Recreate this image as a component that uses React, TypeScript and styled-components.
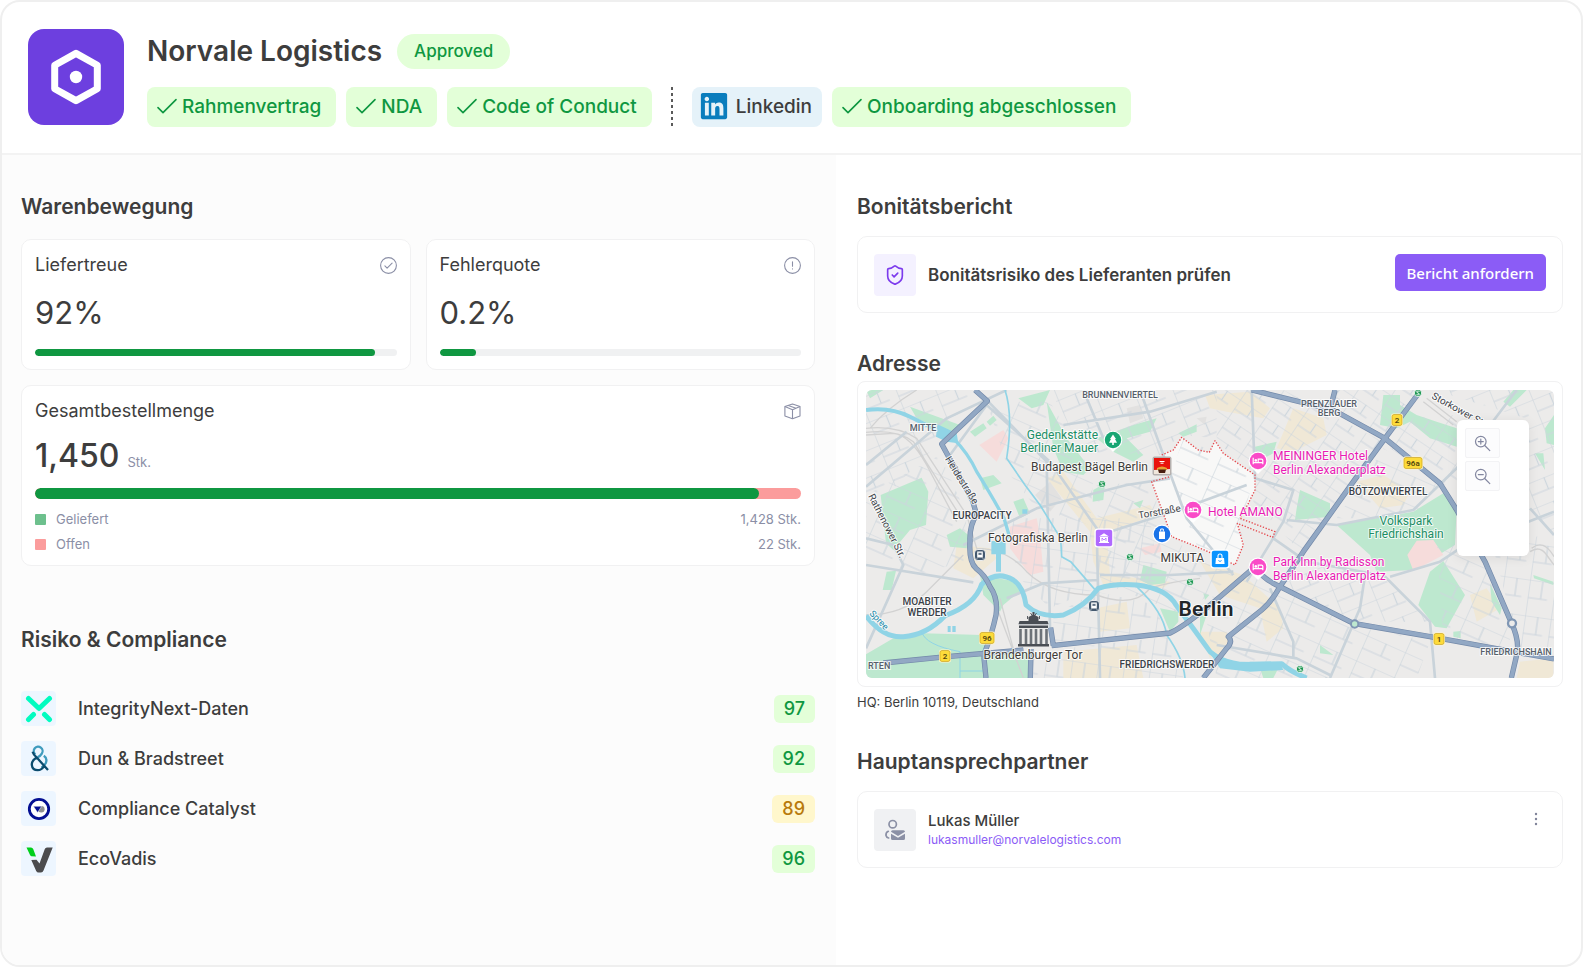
import React from "react";
import styled, { createGlobalStyle } from "styled-components";
import { FaLinkedin } from "react-icons/fa";
import { ShieldCheck } from "lucide-react";

const color = {
  text: "#3d3d3d",
  muted: "#8b8fa6",
  green: "#0f9741",
  greenSoft: "#e3ffd8",
  amber: "#b87a0b",
  amberSoft: "#fff7cc",
  violet: "#8b5cf6",
  line: "#f1f1f2",
};

const GlobalStyle = createGlobalStyle`
  *, *::before, *::after { box-sizing: border-box; }
  body {
    margin: 0;
    background: #fff;
    color: ${color.text};
    font-family: Inter, "Liberation Sans", sans-serif;
  }
  h1, h2, h3, p, ul, dl, dd { margin: 0; padding: 0; font-weight: inherit; }
  svg { display: block; flex: none; }
`;

/* ---------- Page shell ---------- */

const Frame = styled.main`
  display: flex;
  flex-direction: column;
  min-height: 100vh;
  border: 2px solid #efefef;
  border-radius: 20px;
  overflow: hidden;
  background: #fff;
`;

const Header = styled.header`
  display: flex;
  gap: 23px;
  padding: 27px 26px 26px;
  border-bottom: 2px solid #f3f3f3;
`;

const Logo = styled.div`
  display: grid;
  place-items: center;
  flex: none;
  width: 96px;
  height: 96px;
  border-radius: 16px;
  background: #6d3fdf;
`;

const HeaderBody = styled.div`
  display: flex;
  flex-direction: column;
  gap: 18px;
  padding-top: 5px;
`;

const TitleRow = styled.div`
  display: flex;
  align-items: center;
  gap: 15px;
`;

const Title = styled.h1`
  font-size: 28px;
  font-weight: 600;
  line-height: 35px;
`;

const StatusPill = styled.span`
  padding: 0 17px;
  border-radius: 18px;
  background: ${color.greenSoft};
  color: ${color.green};
  font-size: 17px;
  font-weight: 500;
  line-height: 35px;
`;

const TagRow = styled.div`
  display: flex;
  flex-wrap: wrap;
  gap: 10px;
`;

const Tag = styled.span`
  display: flex;
  align-items: center;
  gap: 5px;
  height: 40px;
  padding: 0 15px 2px 10px;
  border-radius: 8px;
  background: ${color.greenSoft};
  color: ${color.green};
  font-size: 19px;
  font-weight: 500;
`;

const LinkTag = styled.a`
  display: flex;
  align-items: center;
  gap: 7px;
  height: 40px;
  padding: 0 10px 2px 7px;
  border-radius: 8px;
  background: #e5f2f9;
  color: ${color.text};
  font-size: 19px;
  font-weight: 500;
  text-decoration: none;
`;

const TagDivider = styled.span`
  width: 2px;
  height: 40px;
  margin: 0 9px;
  background: repeating-linear-gradient(#5a5a5a 0 3px, transparent 3px 6px);
`;

const Columns = styled.div`
  display: grid;
  grid-template-columns: 834fr 745fr;
  flex: 1;
`;

const LeftColumn = styled.div`
  min-width: 0;
  padding: 38px 21px 40px 19px;
  background: #fcfcfc;
`;

const RightColumn = styled.div`
  min-width: 0;
  padding: 38px 18px 40px 21px;
`;

const SectionTitle = styled.h2`
  font-size: 21px;
  font-weight: 600;
  line-height: 28px;
`;

/* ---------- Metrics ---------- */

const MetricGrid = styled.div`
  display: grid;
  grid-template-columns: 1fr 1fr;
  gap: 15px;
  margin: 18px 0 60px;
`;

const MetricCard = styled.article<{ $wide?: boolean }>`
  grid-column: ${(p) => (p.$wide ? "1 / -1" : "auto")};
  padding: 13px;
  border: 1px solid ${color.line};
  border-radius: 10px;
  background: #fff;
`;

const MetricHead = styled.div`
  display: flex;
  align-items: center;
  justify-content: space-between;
`;

const MetricName = styled.h3`
  font-size: 18px;
  line-height: 24px;
`;

const MetricValue = styled.p<{ $compact?: boolean }>`
  margin: ${(p) => (p.$compact ? "13px 0 12px" : "16px 0")};
  font-size: ${(p) => (p.$compact ? 32 : 31)}px;
  font-weight: ${(p) => (p.$compact ? 500 : 400)};
  line-height: 40px;
`;

const Unit = styled.span`
  margin-left: 8px;
  color: ${color.muted};
  font-size: 13px;
  font-weight: 400;
  line-height: 16px;
`;

const Track = styled.div<{ $thick?: boolean }>`
  height: ${(p) => (p.$thick ? 11 : 7)}px;
  border-radius: 6px;
  overflow: hidden;
  background: ${(p) => (p.$thick ? "#fb9c9c" : "#f0f1f2")};
`;

const Fill = styled.div`
  height: 100%;
  border-radius: 6px;
  background: ${color.green};
`;

const Legend = styled.dl`
  display: flex;
  flex-direction: column;
  gap: 9px;
  margin-top: 12px;
  color: ${color.muted};
  font-size: 13px;
  line-height: 16px;
`;

const LegendRow = styled.div`
  display: flex;
  justify-content: space-between;
`;

const LegendTerm = styled.dt<{ $swatch: string }>`
  display: flex;
  align-items: center;
  gap: 10px;
  &::before {
    content: "";
    width: 11px;
    height: 11px;
    border-radius: 1px;
    background: ${(p) => p.$swatch};
  }
`;

/* ---------- Risk list ---------- */

const RiskList = styled.ul`
  display: flex;
  flex-direction: column;
  gap: 15px;
  margin-top: 37px;
  list-style: none;
`;

const RiskRow = styled.li`
  display: flex;
  align-items: center;
  height: 35px;
`;

const RiskIcon = styled.span`
  display: grid;
  place-items: center;
  width: 35px;
  height: 35px;
  margin-right: 22px;
  border-radius: 4px;
  background: #edf6ff;
`;

const RiskName = styled.span`
  flex: 1;
  font-size: 18px;
  font-weight: 500;
`;

const Score = styled.span<{ $warn?: boolean }>`
  padding: 0 10px;
  border-radius: 6px;
  background: ${(p) => (p.$warn ? color.amberSoft : color.greenSoft)};
  color: ${(p) => (p.$warn ? color.amber : color.green)};
  font-size: 18px;
  font-weight: 500;
  line-height: 28px;
`;

/* ---------- Right column ---------- */

const InfoCard = styled.div`
  display: flex;
  align-items: center;
  gap: 12px;
  margin: 15px 0 37px;
  padding: 17px 16px 16px;
  border: 1px solid ${color.line};
  border-radius: 10px;
  background: #fff;
`;

const IconTile = styled.span<{ $tone: string }>`
  display: grid;
  place-items: center;
  width: 42px;
  height: 42px;
  border-radius: 4px;
  background: ${(p) => p.$tone};
`;

const InfoText = styled.p`
  flex: 1;
  font-size: 17px;
  font-weight: 600;
`;

const PrimaryButton = styled.button`
  align-self: flex-start;
  height: 37px;
  padding: 0 12px;
  border: 0;
  border-radius: 5px;
  background: ${color.violet};
  color: #fff;
  font-family: "Noto Sans", sans-serif;
  font-size: 15px;
  font-weight: 500;
`;

const MapCard = styled.div`
  margin-top: 3px;
  padding: 8px;
  border: 1px solid ${color.line};
  border-radius: 8px;
`;

const MapView = styled.div`
  position: relative;
  border-radius: 6px;
  overflow: hidden;
`;

const MapPanel = styled.div`
  position: absolute;
  top: 30px;
  right: 25px;
  display: flex;
  flex-direction: column;
  gap: 3px;
  width: 72px;
  height: 136px;
  padding: 8px;
  border-radius: 6px;
  background: #fff;
  box-shadow: 0 2px 12px rgba(0, 0, 0, 0.08);
`;

const ZoomButton = styled.button`
  display: grid;
  place-items: center;
  width: 35px;
  height: 30px;
  padding: 0;
  border: 1px solid #f3f3f5;
  border-radius: 2px;
  background: #fcfcfd;
`;

const AddressLine = styled.p`
  margin: 5px 0 36px;
  font-size: 13px;
  line-height: 20px;
`;

const ContactBody = styled.div`
  flex: 1;
  line-height: 19px;
`;

const ContactName = styled.p`
  font-size: 15px;
  font-weight: 500;
`;

const MailLink = styled.a`
  display: block;
  color: ${color.violet};
  font-size: 12px;
  text-decoration: none;
`;

const MenuButton = styled.button`
  display: grid;
  place-items: center;
  align-self: flex-start;
  width: 20px;
  height: 20px;
  padding: 0;
  border: 0;
  background: none;
`;

/* ---------- Icons ---------- */

const Tick = () => (
  <svg width="20" height="16" viewBox="0 0 20 16" fill="none" stroke={color.green} strokeWidth="1.6" strokeLinecap="round" strokeLinejoin="round">
    <path d="M1 9.6 6 14.6 19 1.6" />
  </svg>
);

const HexLogo = () => (
  <svg width="52" height="56" viewBox="0 0 52 56">
    <path d="M26 4.400 47.300 16.200V39.800L26 51.600 4.700 39.800V16.200Z" fill="none" stroke="#fff" strokeWidth="7" strokeLinejoin="round" />
    <circle cx="26" cy="28" r="6.200" fill="#fff" />
  </svg>
);

const CheckCircle = () => (
  <svg width="17" height="17" viewBox="0 0 17 17" fill="none" stroke={color.muted} strokeWidth="1.1" strokeLinecap="round" strokeLinejoin="round">
    <circle cx="8.500" cy="8.500" r="7.900" />
    <path d="m4.900 8.900 2.200 2.200 5-4.900" />
  </svg>
);

const AlertCircle = () => (
  <svg width="17" height="17" viewBox="0 0 17 17" fill="none" stroke={color.muted} strokeWidth="1.100" strokeLinecap="round">
    <circle cx="8.500" cy="8.500" r="7.900" />
    <path d="M8.500 4.900v4.400M8.500 11.800v.1" />
  </svg>
);

const BoxIcon = () => (
  <svg width="17" height="17" viewBox="0 0 17 17" fill="none" stroke={color.muted} strokeWidth="1.100" strokeLinejoin="round">
    <path d="M8.500 1.100 16 3.600V13L8.500 15.800.900 13V3.600Z" />
    <path d="M.9 3.600 8.500 6.700 16 3.600M8.500 6.700v9.100M4.300 2.500 12 5.200" />
  </svg>
);

const IntegrityLogo = () => (
  <svg width="28" height="28" viewBox="0 0 28 28" fill="none" stroke="#00fcc0" strokeWidth="5" strokeLinecap="round" strokeLinejoin="round">
    <path d="M3.500 3.500 14 13.500 24.500 3.500" />
    <path d="M3.500 24.500 8.500 19.500M24.500 24.500l-5-5" />
  </svg>
);

const DnbLogo = () => (
  <svg width="24" height="28" viewBox="0 0 24 28" fill="none" strokeWidth="2.300" strokeLinecap="butt">
    <path d="M8.300 9.400A4.400 4.400 0 1 1 14.800 8.600Q13.600 10.800 10.600 12.300" stroke="#3f9bbd" />
    <path d="M16.800 10.800Q20.800 13.400 18.700 18.200 17.400 20.600 14.500 22.400" stroke="#3f9bbd" />
    <path d="M5.600 6.800Q6.500 10 9.800 12.600L21 25M10.400 12.300Q4.800 15 4.800 19.800 5.400 25.200 10.800 25.200 14.600 25.200 17.200 21" stroke="#0b4c6e" />
  </svg>
);

const CatalystLogo = () => (
  <svg width="24" height="24" viewBox="0 0 24 24">
    <circle cx="12" cy="12" r="9.700" fill="#fff" stroke="#040f92" strokeWidth="2.800" />
    <circle cx="14.300" cy="12.200" r="3.300" fill="#8f8f92" />
    <path d="M6.400 9.300h8.200L10.600 15.600Z" fill="#040f92" stroke="#fff" strokeWidth=".5" />
  </svg>
);

const EcoVadisLogo = () => (
  <svg width="28" height="28" viewBox="0 0 28 28">
    <path d="M1.500 2.500H6Q7.500 2.500 8.200 4L11 11.500 6.300 11.200Q5.500 11 5 10Z" fill="#00cf1c" />
    <path d="M6.300 15 11.500 14.800 14.500 18.500 19.800 4Q20.300 2.500 22 2.500H27.700L18.500 25.500Q17.800 27.500 16 27.500H13.500Q12 27.500 11.200 26Z" fill="#4c4c4e" />
  </svg>
);

const ContactIcon = () => (
  <svg width="22" height="22" viewBox="0 0 22 22" fill="none" stroke="#8b90a5" strokeWidth="1.700" strokeLinecap="round">
    <circle cx="8.700" cy="5.200" r="3.700" />
    <path d="M4.300 12.300Q1.600 13.500 2 16.500 2.500 18.500 4.600 19" />
    <path d="M8.600 11.200h10.800q1.600 0 1.600 1.600l-7 4.300-7-4.300q0-1.600 1.600-1.600ZM7 14.700l7 4 7-4v4.800q0 1.600-1.600 1.600H8.600Q7 21.100 7 19.500Z" fill="#8b90a5" stroke="none" />
  </svg>
);

const Magnifier = ({ plus }: { plus?: boolean }) => (
  <svg width="17" height="17" viewBox="0 0 17 17" fill="none" stroke="#8387a0" strokeWidth="1.200" strokeLinecap="round">
    <circle cx="6.800" cy="6.600" r="5.300" />
    <path d="M10.700 10.500 15.800 15.600M4.300 6.600h5" />
    {plus && <path d="M6.800 4.100v5" />}
  </svg>
);

const Dots = () => (
  <svg width="4" height="14" viewBox="0 0 4 14" fill="#7f8499">
    <circle cx="2" cy="2" r="1.200" />
    <circle cx="2" cy="7" r="1.200" />
    <circle cx="2" cy="12" r="1.200" />
  </svg>
);

/* ---------- Map ---------- */

const MapSvg = styled.svg`
  width: 100%;
  height: auto;
  background: #ecebea;
  font-family: Roboto, sans-serif;
`;

type LabelKind = "area" | "district" | "place" | "park" | "hotel" | "street" | "water" | "city";

const labelStyle: Record<LabelKind, { size: number; weight: number; fill: string }> = {
  area: { size: 9, weight: 500, fill: "#56606a" },
  district: { size: 10, weight: 500, fill: "#3a4148" },
  place: { size: 12, weight: 400, fill: "#3f3c38" },
  park: { size: 12, weight: 400, fill: "#1d8e65" },
  hotel: { size: 12, weight: 400, fill: "#e91bb4" },
  street: { size: 10, weight: 400, fill: "#3f454b" },
  water: { size: 9, weight: 400, fill: "#1687a8" },
  city: { size: 21, weight: 600, fill: "#22262a" },
};

const MapText = styled.text<{ $kind: LabelKind }>`
  font-size: ${(p) => labelStyle[p.$kind].size}px;
  font-weight: ${(p) => labelStyle[p.$kind].weight};
  fill: ${(p) => labelStyle[p.$kind].fill};
  stroke: rgba(255, 255, 255, 0.8);
  stroke-width: 2px;
  stroke-linejoin: round;
  paint-order: stroke;
`;

type MapLabel = {
  kind: LabelKind;
  x: number;
  y: number;
  text: string;
  anchor?: "start" | "middle" | "end";
  angle?: number;
};

const labels: MapLabel[] = [
  { kind: "area", x: 254, y: 8, text: "BRUNNENVIERTEL", anchor: "middle" },
  { kind: "area", x: 57, y: 41, text: "MITTE", anchor: "middle" },
  { kind: "area", x: 463, y: 17, text: "PRENZLAUER", anchor: "middle" },
  { kind: "area", x: 463, y: 26, text: "BERG", anchor: "middle" },
  { kind: "area", x: 650, y: 265, text: "FRIEDRICHSHAIN", anchor: "middle" },
  { kind: "area", x: 2, y: 279, text: "RTEN" },
  { kind: "district", x: 116, y: 129, text: "EUROPACITY", anchor: "middle" },
  { kind: "district", x: 522, y: 105, text: "BÖTZOWVIERTEL", anchor: "middle" },
  { kind: "district", x: 61, y: 215, text: "MOABITER", anchor: "middle" },
  { kind: "district", x: 61, y: 226, text: "WERDER", anchor: "middle" },
  { kind: "district", x: 301, y: 278, text: "FRIEDRICHSWERDER", anchor: "middle" },
  { kind: "park", x: 232, y: 49, text: "Gedenkstätte", anchor: "end" },
  { kind: "park", x: 232, y: 62, text: "Berliner Mauer", anchor: "end" },
  { kind: "park", x: 540, y: 135, text: "Volkspark", anchor: "middle" },
  { kind: "park", x: 540, y: 148, text: "Friedrichshain", anchor: "middle" },
  { kind: "place", x: 282, y: 81, text: "Budapest Bägel Berlin", anchor: "end" },
  { kind: "place", x: 222, y: 152, text: "Fotografiska Berlin", anchor: "end" },
  { kind: "place", x: 338, y: 172, text: "MIKUTA", anchor: "end" },
  { kind: "place", x: 167, y: 269, text: "Brandenburger Tor", anchor: "middle" },
  { kind: "hotel", x: 342, y: 126, text: "Hotel AMANO" },
  { kind: "hotel", x: 407, y: 70, text: "MEININGER Hotel" },
  { kind: "hotel", x: 407, y: 84, text: "Berlin Alexanderplatz" },
  { kind: "hotel", x: 407, y: 176, text: "Park Inn by Radisson" },
  { kind: "hotel", x: 407, y: 190, text: "Berlin Alexanderplatz" },
  { kind: "street", x: 294, y: 125, text: "Torstraße", anchor: "middle", angle: -10 },
  { kind: "street", x: 93, y: 92, text: "Heidestraße", anchor: "middle", angle: 58 },
  { kind: "street", x: 2, y: 106, text: "Rathenower Str.", angle: 63 },
  { kind: "street", x: 565, y: 8, text: "Storkower Str.", angle: 29 },
  { kind: "water", x: 3, y: 224, text: "Spree", angle: 46 },
  { kind: "city", x: 340, y: 226, text: "Berlin", anchor: "middle" },
];

const grids: { id: string; w: number; h: number; angle: number }[] = [
  { id: "a", w: 124, h: 82, angle: 24 },
  { id: "b", w: 110, h: 76, angle: -22 },
  { id: "c", w: 78, h: 108, angle: 8 },
  { id: "d", w: 92, h: 66, angle: 34 },
];

/* Street blocks: each area is filled with one of the grids above. */
const blocks: [string, string][] = [
  ["b", "M48 45H370L270 200 130 340 48 360Z"],
  ["a", "M48 360 270 240 350 420 340 560 200 600 48 560Z"],
  ["a", "M410 80H600L730 300 720 450 560 400 480 300Z"],
  ["b", "M600 45H1100V190L990 180 930 240 700 230Z"],
  ["c", "M480 430H900L930 640 740 640 600 700 500 600Z"],
  ["a", "M740 330 900 320 960 500 1090 540 1150 600 1000 720 750 620Z"],
  ["c", "M610 720 740 650 920 690 940 770 610 800Z"],
  ["c", "M550 830 960 785 1000 909H550Z"],
  ["a", "M960 310 1000 190 1090 230 1210 310 1180 430 1170 560 1040 510Z"],
  ["d", "M1100 45H1300L1600 200 1360 540 1210 380 1220 300 1100 200Z"],
  ["d", "M1450 45H1700L1610 190 1440 100Z"],
  ["d", "M1650 130 1820 120V330L1770 330 1620 220Z"],
  ["a", "M1600 220 1760 330 1690 430 1460 430Z"],
  ["a", "M1060 680 1200 600 1290 640 1490 740 1740 800 1700 909H1100Z"],
  ["b", "M1310 560 1590 600 1740 740 1510 740 1310 640Z"],
  ["a", "M1760 500 1890 520 1980 750 1980 820 1780 790Z"],
  ["c", "M1930 520 2112 470V860L2010 830Z"],
  ["b", "M1750 45H2112V480L2040 400 2030 130Z"],
];

const parks = [
  "M92 360 215 308 235 350 228 450 180 465 130 525 108 505Z",
  "M48 838 130 790 220 775 395 780 410 825 540 830V909H48Z",
  "M48 45 100 45 60 70ZM180 95 330 150 300 175 200 130Z",
  "M505 70 600 45 580 90 545 100ZM590 80 650 190 720 280 700 300 640 290 610 220Z",
  "M740 190 850 150 920 130 900 170 830 190 880 240 850 260 790 230Z",
  "M985 175 1040 148 1040 170 1000 185ZM980 300 1050 260 1040 320 1010 340 960 320Z",
  "M110 590 138 587 125 645 98 645ZM360 170 400 145 410 160 375 185ZM410 140 430 122 440 135 420 152Z",
  "M390 600 500 620 520 640 460 690 450 710 400 660Z",
  "M390 310 430 300 455 325 400 345ZM490 380 520 370 540 415 510 430ZM290 480 330 460 355 480 350 520 300 515Z",
  "M880 570 950 590 945 625 900 630 870 615ZM930 700 985 710 985 740 960 770ZM1050 700 1070 720 1050 780Z",
  "M730 345 765 325 760 375 728 380ZM850 385 880 375 870 400Z",
  "M1460 450 1690 410 1780 355 1820 400 1815 510 1690 585 1580 590 1560 540Z",
  "M1740 590 1780 558 1845 660 1790 760 1755 755 1705 690Z",
  "M1350 345 1440 385 1440 425 1335 435 1340 400Z",
  "M1600 60 1650 60 1650 90 1700 120 1760 140 1820 160V215L1740 190 1680 140 1640 160 1590 150Z",
  "M1215 215 1280 200 1270 235 1220 260ZM1135 310 1165 315 1150 345 1125 330Z",
  "M1960 80 1990 45H2030L1980 95ZM2085 160 2112 120V210L2090 205ZM2055 235 2080 235 2085 285Z",
  "M1410 810 1450 840 1410 835ZM1810 770 1832 768 1832 790 1810 785ZM1060 655 1078 660 1065 675Z",
  "M1920 625 1955 700 1950 720 1925 680ZM2050 600 2110 620V630L2052 610Z",
  "M1230 880 1290 870 1270 909H1240Z",
];

const centres = [
  "M590 310 640 290 740 430 900 390 920 420 770 470 780 600 960 620 940 640 760 630 730 560 720 470Z",
  "M1065 60 1200 50 1260 100 1240 130 1130 110 1080 100Z",
  "M1330 100 1420 130 1430 180 1330 230 1280 220Z",
  "M1520 320 1600 300 1680 350 1660 390 1590 400Z",
  "M320 510 420 520 440 550 370 610 310 580Z",
  "M640 830 860 810 880 909H640ZM740 700 830 680 840 760 750 770Z",
  "M1050 560 1180 600 1290 700 1300 760 1250 800 1230 700 1110 660Z",
  "M1860 660 1910 640 1950 700 1880 740ZM2010 860 2110 850V909H2000Z",
  "M1050 770 1130 770 1140 820 1080 850Z",
];

const mainRoads = [
  "M375 45 412 78 275 207 368 378 380 420Q358 450 360 500 356 560 378 580 405 600 420 635 445 670 438 720 425 780 405 830L402 850 408 909",
  "M100 864 290 845 520 825M605 812 960 774Q1010 750 1110 665L1215 575",
  "M602 758 610 812M543 822 541 909",
  "M1215 575Q1235 610 1290 635L1510 745 1770 790 2112 852",
  "M1060 909 1130 820Q1150 800 1135 785L1235 705Q1265 680 1290 635L1360 530 1510 320 1605 190 1702 60",
  "M1205 45 1450 105 1605 190 1770 325 1820 405 1905 560 1985 745Q2010 800 2000 840L1984 909",
  "M1455 45 1440 105",
];

const streets = [
  "M48 335 290 130 470 45M300 240 410 90 600 260 740 460 750 909M48 270 170 170",
  "M340 510 560 400 830 330 960 310M415 80 590 260 600 760",
  "M48 490 130 510 160 570 48 820M48 570 370 622M470 670 580 625 740 615",
  "M640 150 900 110 1100 50M870 45 940 240 1010 430 1150 600M700 45 760 190",
  "M780 470 1000 400 1190 330M750 600 960 600 1150 590",
  "M1205 45 1215 310 1330 345 1300 440 1190 620",
  "M1310 435 1460 450 1690 405 1830 270 2000 45",
  "M1600 600 1740 740 1755 909M1620 605 1770 560 1830 520M1545 600 1530 700 1440 909",
  "M2035 440 2112 410M2040 400 2112 480M1270 490 1370 560 1590 600",
  "M1100 810 1340 850 1440 900M1260 640 1330 800 1330 850",
];

const Bed = ({ x, y }: { x: number; y: number }) => (
  <g transform={`translate(${x} ${y})`}>
    <path d="M0 13 5 8H-5Z" fill="#fff" />
    <circle r="9.500" fill="#fff" />
    <circle r="8.300" fill="#fa4bc8" />
    <path d="M-4.800-3.200V3.200M-4.800 1.600H4.800V3.200M4.800 1.600V-.8Q4.800-1.800 3.600-1.800H.2V1.600" fill="none" stroke="#fff" strokeWidth="1.200" />
    <circle cx="-2.200" cy="-.6" r="1.300" fill="#fff" />
  </g>
);

const RouteSign = ({ x, y, label }: { x: number; y: number; label: string }) => {
  const w = 6 + label.length * 4;
  return (
    <g transform={`translate(${x} ${y})`}>
      <rect x={-w / 2 - 1} y="-6.500" width={w + 2} height="13" rx="2.500" fill="#fff6c9" />
      <rect x={-w / 2} y="-5.500" width={w} height="11" rx="2" fill="#fddb3a" stroke="#c9a227" strokeWidth=".7" />
      <text y="3" textAnchor="middle" fontSize="8" fontWeight="600" fill="#54450c">{label}</text>
    </g>
  );
};

const SBahn = ({ x, y }: { x: number; y: number }) => (
  <g transform={`translate(${x} ${y})`}>
    <circle r="3.600" fill="#15934c" stroke="#fff" strokeWidth=".8" />
    <path d="M1.500-1.500Q0-2.600-1.300-1.500-1.500-.3 0 0 1.600.4 1.300 1.500 0 2.500-1.500 1.400" fill="none" stroke="#fff" strokeWidth=".9" />
  </g>
);

const Station = ({ x, y }: { x: number; y: number }) => (
  <g transform={`translate(${x} ${y})`}>
    <rect x="-5.500" y="-5.500" width="11" height="11" rx="3.500" fill="#44596f" stroke="#fff" strokeWidth=".8" />
    <path d="M-2.800-3.500H2.800V2.500H-2.800Z" fill="#fff" />
    <path d="M-1.800-2.200H1.800V0H-1.800ZM-2.500 2.700-3.300 4M2.500 2.700 3.300 4" fill="#44596f" stroke="#fff" strokeWidth=".5" />
  </g>
);

const Gate = () => (
  <g transform="translate(167.500 241)" fill="#4a4e54">
    <path d="M-1-19H1V-16L5-14H-5L-1-16ZM-4-18V-14.500M-5-14H5V-10H-5Z" />
    <path d="M-6-15v3M6-15v3M-3-18l2 3M3-18l-2 3" stroke="#4a4e54" strokeWidth=".9" />
    <path d="M-14-10H14L15-7H-15ZM-14.500-5.500H14.500V-3H-14.500ZM-15.500 13H15.500V15.500H-15.500Z" />
    <path d="M-13-2V13M-7.500-2V13M-2.500-2V13M2.500-2V13M7.500-2V13M13-2V13" stroke="#6d7278" strokeWidth="2.600" />
    <path d="M-15-6.500H15" stroke="#b9bdc2" strokeWidth=".8" />
  </g>
);

const BerlinMap = () => (
  <MapSvg viewBox="0 0 688 288" role="img" aria-label="Karte von Berlin">
    <defs>
      {grids.map((g) => (
        <pattern key={g.id} id={`grid-${g.id}`} width={g.w} height={g.h} patternUnits="userSpaceOnUse" patternTransform={`rotate(${g.angle})`}>
          <path d={`M0 0H${g.w}M0 0V${g.h}M${g.w / 2} 0V${g.h / 2}M0 ${g.h / 2}H${g.w * 0.75}`} fill="none" stroke="#cdd6dd" strokeWidth="3.600" />
        </pattern>
      ))}
    </defs>
    <g transform="scale(.333333) translate(-48 -45)" fill="none" strokeLinejoin="round">
      <path d={centres.join("")} fill="#f0e8d6" />
      <path d={parks.join("")} fill="#bde8cf" />
      <path d="M388 210 460 165 475 190 440 260ZM480 455 560 430 570 480 580 590 540 600 480 520ZM870 520 930 505 935 530 885 540ZM1700 497 1750 495 1780 540 1690 587 1672 540Z" fill="#f6dcdb" />
      <path d="M555 360 600 320 635 370 600 410ZM830 100 870 90 880 130 840 145ZM950 250 980 245 975 280ZM1040 130 1070 125 1065 150Z" fill="#e2e1e0" />
      <path d="M935 240 970 225 995 187 1045 225 1078 232 1095 197 1120 235 1215 300 1215 345 1190 395 1165 445 1180 510 1155 570 1085 535 965 485 945 430 905 320 960 305Z" fill="#f8f8f7" />
      {blocks.map(([id, d]) => (
        <path key={d} d={d} fill={`url(#grid-${id})`} />
      ))}
      <g stroke="#d2d2d2" strokeWidth="4">
        <path d="M48 160Q140 150 200 190L350 420 380 520Q470 520 530 590 600 660 740 660 850 700 900 640 960 620 1050 610M48 172Q140 162 190 200L335 430M48 180 130 175Q180 180 230 270L320 440M48 720Q160 720 230 650L340 540M60 160Q110 100 200 45M430 670 520 909M450 670 500 860M1720 80 1810 150M1730 70 1820 140" />
        <path d="M2040 530Q2070 510 2090 540L2112 570M2045 520Q2080 490 2112 545" />
      </g>
      <path d={streets.join("")} stroke="#c9d3da" strokeWidth="8" />
      <g stroke="#90d4e6">
        <path d="M48 105Q120 95 180 125L260 165" strokeWidth="12" />
        <path d="M262 148 320 175 325 205 290 200 258 185Z" fill="#90d4e6" stroke="none" />
        <path d="M310 190Q355 235 380 290 430 370 462 430L480 490" strokeWidth="10" />
        <path d="M424 498H467V538H453V590H438V538H424ZM517 403H532V416H517ZM293 753H302V771H293ZM307 753H317V771H307Z" fill="#90d4e6" stroke="none" />
        <path d="M48 722Q100 790 160 785 230 780 285 722 375 690 395 628 440 585 490 615 520 635 528 690 570 730 640 720 705 695 745 640 790 625 860 630 950 640 978 690 1030 760 1080 830L1120 860Q1170 880 1200 868L1295 866Q1320 890 1370 909" strokeWidth="15" />
        <path d="M1050 790Q1090 850 1170 860L1290 862 1300 885 1200 890 1110 880Z" fill="#90d4e6" stroke="none" />
        <path d="M465 45Q490 120 470 250L525 330 570 390 632 490 635 545 662 560 740 650M860 635Q940 710 950 780 1000 850 1005 909" strokeWidth="5" />
        <path d="M215 770Q225 810 330 830V909M330 888H400" strokeWidth="3" />
      </g>
      <g strokeLinecap="butt">
        <path d={mainRoads.join("")} stroke="#7389a9" strokeWidth="16" />
        <path d={mainRoads.join("")} stroke="#92a8c4" strokeWidth="12" />
        <circle cx="1514" cy="747" r="11" fill="#bde8cf" stroke="#7f96b4" strokeWidth="6" />
        <circle cx="1986" cy="745" r="12" fill="#ecebea" stroke="#7f96b4" strokeWidth="7" />
      </g>
      <path d="M935 240 970 225 995 187 1045 225 1078 232 1095 197 1120 235 1215 300 1215 345 1190 395 1170 430 1275 470 1268 487 1162 445 1180 510 1155 570 1085 535 1040 515 965 485 945 430 905 320 960 305" stroke="#e5484d" strokeWidth="4" strokeDasharray="4 5" />
    </g>

    <SBahn x={236} y={94} />
    <SBahn x={264} y={167} />
    <SBahn x={324} y={192} />
    <SBahn x={552} y={3} />
    <SBahn x={434} y={279} />
    <Station x={114} y={165} />
    <Station x={228} y={216} />
    <RouteSign x={121} y={248} label="96" />
    <RouteSign x={79} y={266} label="2" />
    <RouteSign x={531} y={30} label="2" />
    <RouteSign x={547} y={73} label="96a" />
    <RouteSign x={573} y={249} label="1" />
    <Gate />

    {labels.map((l, i) => (
      <MapText
        key={i}
        $kind={l.kind}
        textAnchor={l.anchor ?? "start"}
        transform={`translate(${l.x} ${l.y})${l.angle ? ` rotate(${l.angle})` : ""}`}
      >
        {l.text}
      </MapText>
    ))}

    <g transform="translate(247 50)">
      <path d="M0 12 5 7H-5Z" fill="#fff" />
      <circle r="9.300" fill="#fff" />
      <circle r="8.200" fill="#17a673" />
      <path d="M0-5.500 3-1H2L4 2.800H.8V5H-.8V2.800H-4L-2-1H-3Z" fill="#fff" />
    </g>
    <Bed x={327} y={120} />
    <Bed x={392} y={71} />
    <Bed x={392} y={177} />
    <g transform="translate(296 144)">
      <circle r="9.500" fill="#fff" />
      <circle r="8.300" fill="#1a73e8" />
      <path d="M-3-2.500H3V5H-3Z" fill="#fff" />
      <path d="M-1.300-2.500V-5H1.300V-2.500" fill="none" stroke="#fff" />
    </g>
    <g transform="translate(238 148)">
      <rect x="-9.500" y="-9.500" width="19" height="19" rx="3" fill="#fff" />
      <rect x="-8.200" y="-8.200" width="16.400" height="16.400" rx="2" fill="#b069ff" />
      <path d="M-5-1.500 0-4.800 5-1.500ZM-5 4H5V5H-5ZM-4-1H4V4H-4Z" fill="#fff" />
      <path d="M-2 3V0L0 2 2 0V3" fill="none" stroke="#b069ff" strokeWidth=".8" />
    </g>
    <g transform="translate(354 169)">
      <rect x="-9.500" y="-9.500" width="19" height="19" rx="3" fill="#fff" />
      <rect x="-8.200" y="-8.200" width="16.400" height="16.400" rx="2" fill="#0a94ff" />
      <path d="M-4-1H4L4.600 5H-4.600Z" fill="#fff" />
      <path d="M-2-1V-3Q-2-5 0-5 2-5 2-3V-1" fill="none" stroke="#fff" strokeWidth="1.100" />
      <path d="M-1.600 1.500Q0 3.500 1.600 1.500" fill="none" stroke="#0a94ff" strokeWidth=".9" />
    </g>
    <g transform="translate(296 76)">
      <rect x="-9.500" y="-9.500" width="19" height="19" rx="2" fill="#b5b0ae" />
      <rect x="-8" y="-8" width="16" height="16" fill="#e9120c" />
      <path d="M-8 4 8 3V8H-8Z" fill="#f1e7dc" />
      <path d="M-5 2Q0-1 5 2V4H-5Z" fill="#e8a032" />
      <path d="M-4 3.500H4L3 7H-3Z" fill="#4a1f10" />
      <path d="M-2.500-4.500H2.500M-1.500-2.800H1.500" stroke="#fff" strokeWidth="1" />
    </g>
  </MapSvg>
);

/* ---------- Page ---------- */

const risks = [
  { name: "IntegrityNext-Daten", score: 97, icon: <IntegrityLogo /> },
  { name: "Dun & Bradstreet", score: 92, icon: <DnbLogo /> },
  { name: "Compliance Catalyst", score: 89, warn: true, icon: <CatalystLogo /> },
  { name: "EcoVadis", score: 96, icon: <EcoVadisLogo /> },
];

const rates = [
  { name: "Liefertreue", value: "92%", fill: 94, icon: <CheckCircle /> },
  { name: "Fehlerquote", value: "0.2%", fill: 10, icon: <AlertCircle /> },
];

export default function App() {
  return (
    <>
      <GlobalStyle />
      <Frame>
        <Header>
          <Logo><HexLogo /></Logo>
          <HeaderBody>
            <TitleRow>
              <Title>Norvale Logistics</Title>
              <StatusPill>Approved</StatusPill>
            </TitleRow>
            <TagRow>
              {["Rahmenvertrag", "NDA", "Code of Conduct"].map((t) => (
                <Tag key={t}><Tick />{t}</Tag>
              ))}
              <TagDivider />
              <LinkTag href="#linkedin">
                <FaLinkedin size={30} color="#0a7dbd" />
                Linkedin
              </LinkTag>
              <Tag><Tick />Onboarding abgeschlossen</Tag>
            </TagRow>
          </HeaderBody>
        </Header>

        <Columns>
          <LeftColumn>
            <SectionTitle>Warenbewegung</SectionTitle>
            <MetricGrid>
              {rates.map((r) => (
                <MetricCard key={r.name}>
                  <MetricHead>
                    <MetricName>{r.name}</MetricName>
                    {r.icon}
                  </MetricHead>
                  <MetricValue>{r.value}</MetricValue>
                  <Track><Fill style={{ width: `${r.fill}%` }} /></Track>
                </MetricCard>
              ))}
              <MetricCard $wide>
                <MetricHead>
                  <MetricName>Gesamtbestellmenge</MetricName>
                  <BoxIcon />
                </MetricHead>
                <MetricValue $compact>1,450<Unit>Stk.</Unit></MetricValue>
                <Track $thick><Fill style={{ width: "94.5%" }} /></Track>
                <Legend>
                  <LegendRow>
                    <LegendTerm $swatch="#6dc08d">Geliefert</LegendTerm>
                    <dd>1,428 Stk.</dd>
                  </LegendRow>
                  <LegendRow>
                    <LegendTerm $swatch="#fb9c9c">Offen</LegendTerm>
                    <dd>22 Stk.</dd>
                  </LegendRow>
                </Legend>
              </MetricCard>
            </MetricGrid>

            <SectionTitle>Risiko &amp; Compliance</SectionTitle>
            <RiskList>
              {risks.map((r) => (
                <RiskRow key={r.name}>
                  <RiskIcon>{r.icon}</RiskIcon>
                  <RiskName>{r.name}</RiskName>
                  <Score $warn={r.warn}>{r.score}</Score>
                </RiskRow>
              ))}
            </RiskList>
          </LeftColumn>

          <RightColumn>
            <SectionTitle>Bonitätsbericht</SectionTitle>
            <InfoCard>
              <IconTile $tone="#f4f1ff"><ShieldCheck size={22} strokeWidth={1.8} color="#7c3aed" /></IconTile>
              <InfoText>Bonitätsrisiko des Lieferanten prüfen</InfoText>
              <PrimaryButton type="button">Bericht anfordern</PrimaryButton>
            </InfoCard>

            <SectionTitle>Adresse</SectionTitle>
            <MapCard>
              <MapView>
                <BerlinMap />
                <MapPanel>
                  <ZoomButton type="button" aria-label="Vergrößern"><Magnifier plus /></ZoomButton>
                  <ZoomButton type="button" aria-label="Verkleinern"><Magnifier /></ZoomButton>
                </MapPanel>
              </MapView>
            </MapCard>
            <AddressLine>HQ: Berlin 10119, Deutschland</AddressLine>

            <SectionTitle>Hauptansprechpartner</SectionTitle>
            <InfoCard>
              <IconTile $tone="#f0f1f3"><ContactIcon /></IconTile>
              <ContactBody>
                <ContactName>Lukas Müller</ContactName>
                <MailLink href="mailto:lukasmuller@norvalelogistics.com">lukasmuller@norvalelogistics.com</MailLink>
              </ContactBody>
              <MenuButton type="button" aria-label="Weitere Aktionen"><Dots /></MenuButton>
            </InfoCard>
          </RightColumn>
        </Columns>
      </Frame>
    </>
  );
}
